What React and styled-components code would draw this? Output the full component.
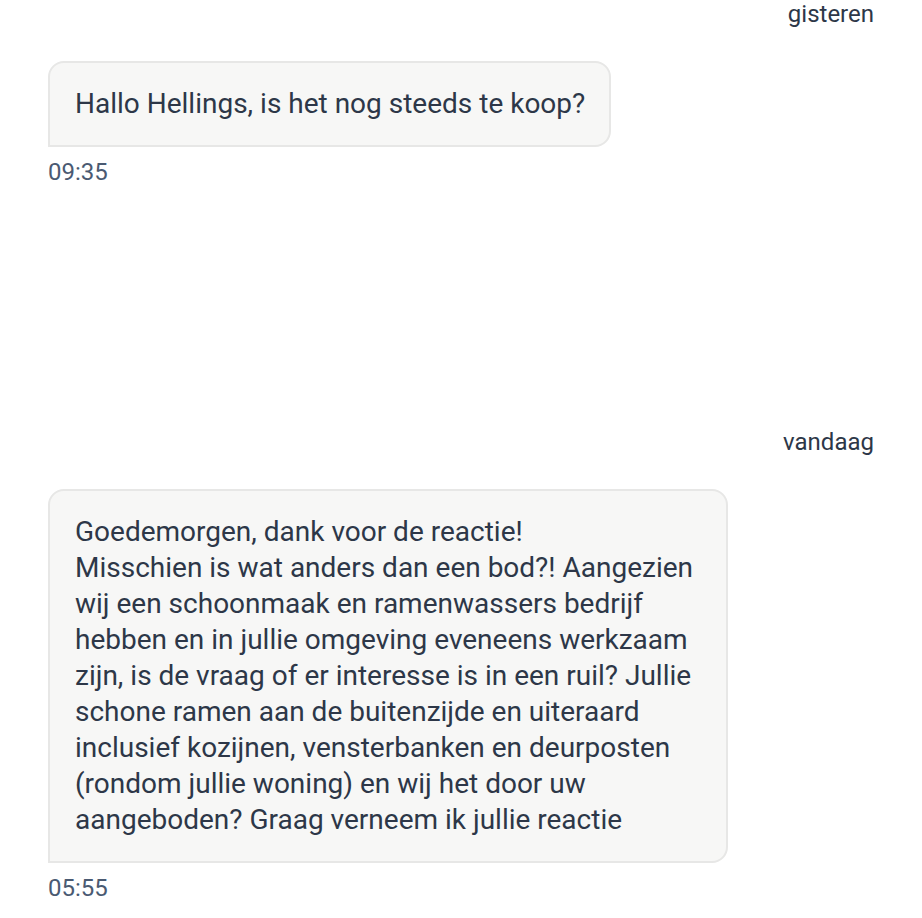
import React from "react";
import styled, { createGlobalStyle } from "styled-components";

const GlobalStyle = createGlobalStyle`
  html, body {
    margin: 0;
    padding: 0;
    background: #ffffff;
  }
  body {
    font-family: Roboto, "Noto Sans", "Liberation Sans", sans-serif;
    -webkit-font-smoothing: antialiased;
  }
`;

const Thread = styled.main`
  width: 922px;
  box-sizing: border-box;
  padding: 0 48px 0 48px;
  display: flex;
  flex-direction: column;
`;

const DayGroup = styled.section`
  display: flex;
  flex-direction: column;
  min-height: ${(p) => p.$minHeight || 0}px;
`;

const DayLabel = styled.div`
  align-self: flex-end;
  font-size: 24px;
  line-height: 28px;
  color: #2d3748;
  margin-bottom: 33px;
`;

const Message = styled.div`
  display: flex;
  flex-direction: column;
  align-items: flex-start;
`;

const Bubble = styled.div`
  max-width: 680px;
  box-sizing: border-box;
  padding: 23px 24px 23px 25px;
  background: #f7f7f6;
  border: 2px solid #e7e7e6;
  border-radius: 16px 16px 16px 0;
  color: #2d3748;
  font-size: 28px;
  line-height: 36px;
  white-space: pre-wrap;
`;

const Time = styled.span`
  margin-top: 12px;
  font-size: 24px;
  line-height: 26px;
  color: #4a5a72;
`;

const days = [
  {
    label: "gisteren",
    minHeight: 428,
    messages: [{ text: "Hallo Hellings, is het nog steeds te koop?", time: "09:35" }],
  },
  {
    label: "vandaag",
    minHeight: 0,
    messages: [
      {
        text:
          "Goedemorgen, dank voor de reactie!\nMisschien is wat anders dan een bod?! Aangezien wij een schoonmaak en ramenwassers bedrijf hebben en in jullie omgeving eveneens werkzaam zijn, is de vraag of er interesse is in een ruil? Jullie schone ramen aan de buitenzijde en uiteraard inclusief kozijnen, vensterbanken en deurposten (rondom jullie woning) en wij het door uw aangeboden? Graag verneem ik jullie reactie",
        time: "05:55",
      },
    ],
  },
];

export default function App() {
  return (
    <>
      <GlobalStyle />
      <Thread>
        {days.map((day) => (
          <DayGroup key={day.label} $minHeight={day.minHeight}>
            <DayLabel>{day.label}</DayLabel>
            {day.messages.map((m) => (
              <Message key={m.time}>
                <Bubble>{m.text}</Bubble>
                <Time>{m.time}</Time>
              </Message>
            ))}
          </DayGroup>
        ))}
      </Thread>
    </>
  );
}
